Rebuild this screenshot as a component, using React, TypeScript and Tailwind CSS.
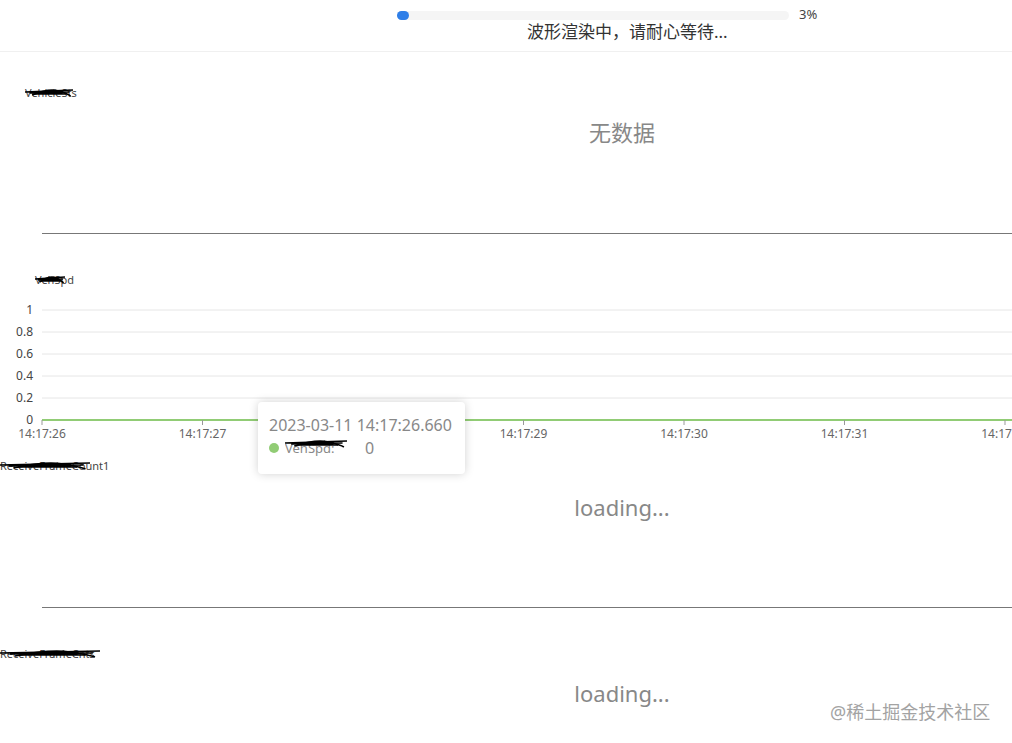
const FONT = { fontFamily: '"Noto Sans", "Noto Sans CJK SC", sans-serif' }

const X_TICKS = ['14:17:26', '14:17:27', '14:17:28', '14:17:29', '14:17:30', '14:17:31', '14:17:32', '14:17:33']
const Y_TICKS = ['1', '0.8', '0.6', '0.4', '0.2', '0']

// 涂抹掉的信号名
function Scribble({ width }: { width: number }) {
  const pts: string[] = []
  for (let i = 0; i < 9; i++) {
    const x1 = (i * width) / 10
    const x2 = width - (i * width) / 14
    pts.push(`M${x1} ${5 + (i % 3)} L${x2} ${3 + ((i * 2) % 5)}`)
  }
  return (
    <svg width={width} height={12} className="absolute left-0 top-[1px]" viewBox={`0 0 ${width} 12`}>
      <path d={pts.join(' ')} stroke="#000" strokeWidth="1.3" fill="none" />
      <path d={`M${width * 0.15} 8 Q${width * 0.5} 1 ${width * 0.7} 4 T${width * 0.95} 9`} stroke="#000" strokeWidth="1.6" fill="none" />
    </svg>
  )
}

function SignalLabel({ text, cover, pl }: { text: string; cover: number; pl: string }) {
  return (
    <div className={`${pl} h-[14px] leading-[14px] text-[11px] text-[#444]`}>
      <span className="relative inline-block">
        {text}
        <Scribble width={cover} />
      </span>
    </div>
  )
}

function Chart() {
  const x0 = 42
  const step = 160.5
  return (
    <div className="relative h-[145px]">
      <svg width={1244} height={145} className="block">
        {Y_TICKS.map((t, i) => (
          <g key={t}>
            {i < 5 && <line x1={x0} x2={1244} y1={10 + i * 22} y2={10 + i * 22} stroke="#e6e6e6" strokeWidth="1" />}
            <text x={33} y={14 + i * 22} textAnchor="end" fontSize="12" fill="#444" style={FONT}>
              {t}
            </text>
          </g>
        ))}
        <line x1={x0} x2={1244} y1={120} y2={120} stroke="#91cc75" strokeWidth="2" />
        {X_TICKS.map((t, i) => (
          <g key={t}>
            <line x1={x0 + i * step} x2={x0 + i * step} y1={120} y2={125} stroke="#999" strokeWidth="1" />
            <text x={x0 + i * step} y={138} textAnchor="middle" fontSize="12" fill="#666" style={FONT}>
              {t}
            </text>
          </g>
        ))}
      </svg>
      <div className="absolute left-[258px] top-[102px] w-[207px] h-[72px] bg-white rounded-[4px] shadow-[0_0_10px_rgba(0,0,0,0.18)] px-[11px] pt-[12px]">
        <div className="text-[16px] leading-[22px] text-[#888] whitespace-nowrap">2023-03-11 14:17:26.660</div>
        <div className="flex items-center mt-[1px] text-[16px] leading-[22px] text-[#888]">
          <span className="w-[10px] h-[10px] rounded-full bg-[#91cc75]" />
          <span className="relative ml-[6px] w-[70px] text-[13px] overflow-hidden whitespace-nowrap">
            VehSpd:
            <Scribble width={62} />
          </span>
          <span className="ml-[10px]">0</span>
        </div>
      </div>
    </div>
  )
}

export default function App() {
  return (
    <div className="relative w-[1012px] h-[743px] overflow-hidden bg-white" style={FONT}>
      <div className="w-[1244px]">
        {/* 顶部进度 */}
        <div className="h-[52px] border-b border-[#f0f0f0]">
          <div className="flex items-center pl-[397px] pt-[9px] h-[21px]">
            <div className="w-[392px] h-[9px] rounded-full bg-[#f5f5f5]">
              <div className="w-[12px] h-[9px] rounded-full bg-[#2f7fe8]" />
            </div>
            <span className="ml-[10px] text-[13px] text-[#444]">3%</span>
          </div>
          <div className="pl-[527px] text-[17px] leading-[22px] text-[#333]">波形渲染中，请耐心等待...</div>
        </div>

        {/* 信号 1 */}
        <div className="h-[181px] pt-[34px]">
          <SignalLabel text="VehicleSts" pl="pl-[25px]" cover={48} />
          <div className="mt-[19px] text-center text-[22px] leading-[26px] text-[#888]">无数据</div>
        </div>
        <div className="ml-[42px] h-px bg-[#777]" />

        {/* 信号 2 */}
        <div className="pt-[39px]">
          <SignalLabel text="VehSpd" pl="pl-[35px]" cover={30} />
          <div className="mt-[13px]">
            <Chart />
          </div>
        </div>

        {/* 信号 3 */}
        <div className="h-[162px] pt-[14px]">
          <SignalLabel text="ReceiveFrameCount1" pl="pl-0" cover={90} />
          <div className="mt-[20px] text-center text-[22px] leading-[28px] text-[#888]">loading...</div>
        </div>
        <div className="ml-[42px] h-px bg-[#777]" />

        {/* 信号 4 */}
        <div className="pt-[39px]">
          <SignalLabel text="ReceiveFrameCnts" pl="pl-0" cover={100} />
          <div className="mt-[18px] text-center text-[22px] leading-[28px] text-[#888]">loading...</div>
        </div>
      </div>

      <div className="absolute left-[830px] top-[700px] text-[18px] leading-[24px] text-[#a3a3a3] whitespace-nowrap">@稀土掘金技术社区</div>
    </div>
  )
}
